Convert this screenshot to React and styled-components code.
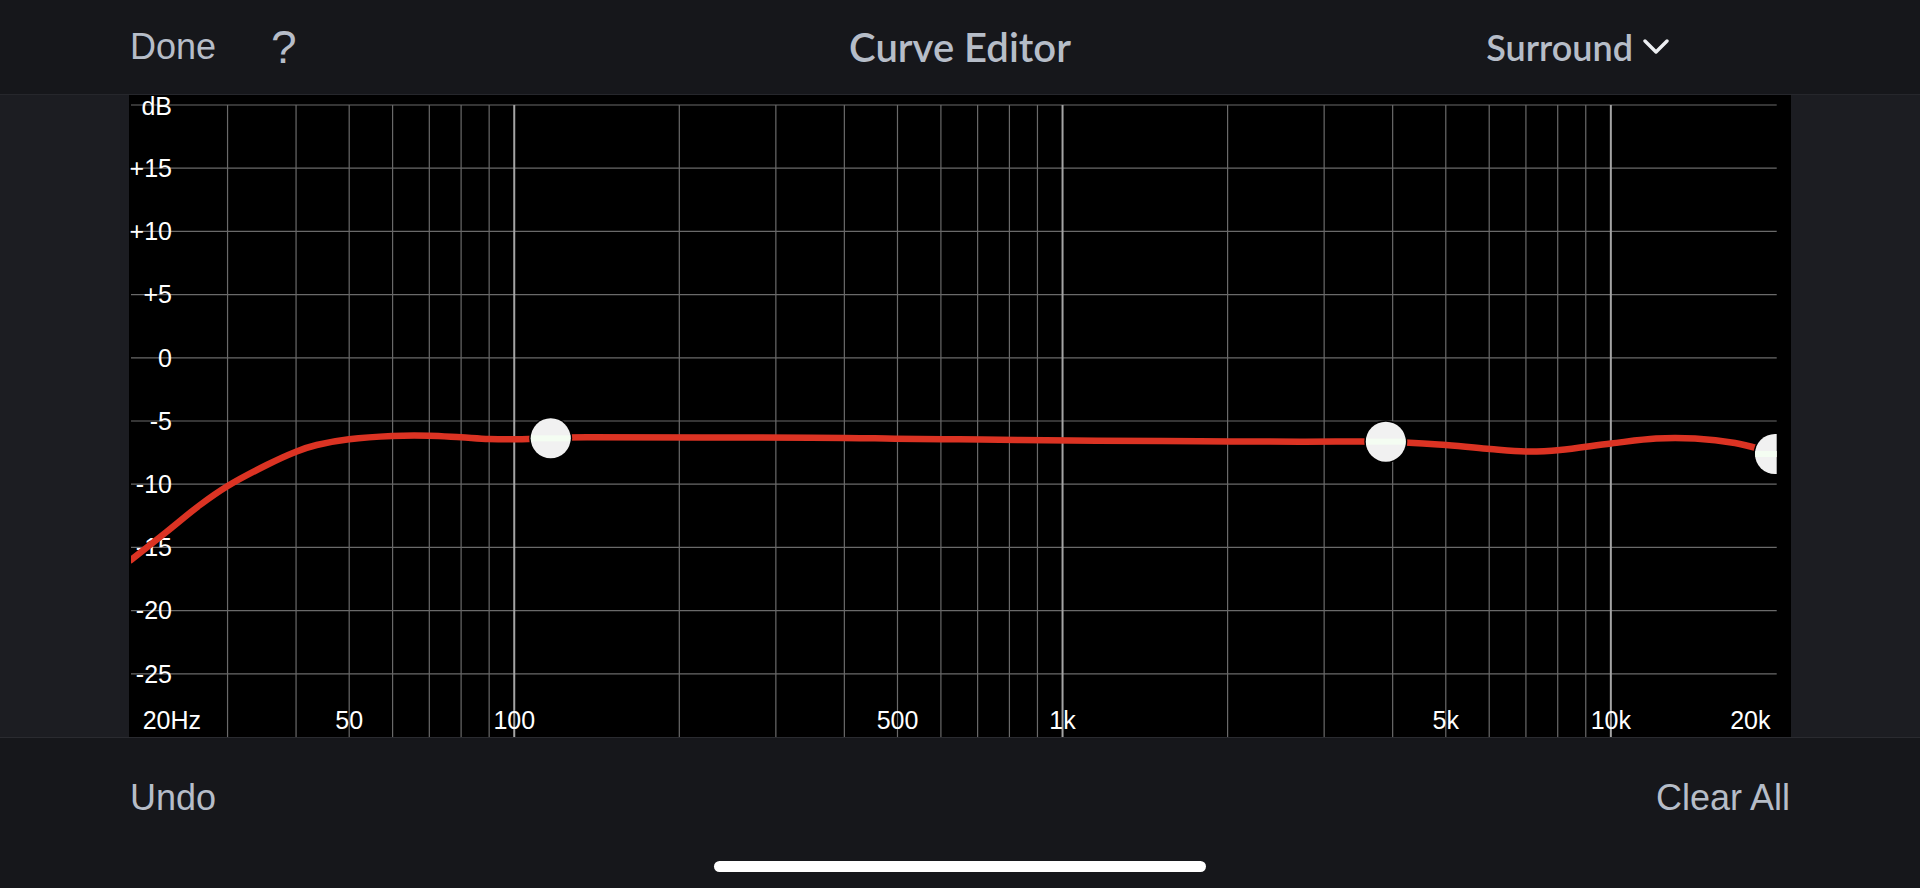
import React from "react";
import styled, { createGlobalStyle } from "styled-components";

const GlobalStyle = createGlobalStyle`
    html, body {
        margin: 0;
        padding: 0;
        background: #16171b;
    }
    #root {
        height: 888px;
    }
`

const Page = styled.div`
    height: 888px;
    display: flex;
    flex-direction: column;
    background: #16171b;
    overflow: hidden;
`

const Header = styled.div`
    height: 94px;
    flex-shrink: 0;
    display: grid;
    grid-template-columns: 1fr auto 1fr;
    align-items: center;
    padding: 0 130px;
    border-bottom: 1px solid #26272c;
`

const LeftGroup = styled.div`
    display: flex;
    align-items: center;
    gap: 55px;
`

const NavButton = styled.div`
    font-family: "Liberation Sans", Arial, sans-serif;
    font-size: ${(p) => p.size || 36}px;
    font-weight: ${(p) => p.weight || 400};
    color: #b6bdc8;
    line-height: 1;
`

const Title = styled.div`
    font-family: Lato, "Noto Sans", sans-serif;
    font-size: 40px;
    font-weight: 600;
    color: #b6bdc8;
    line-height: 1;
`

const ModeSelect = styled.div`
    justify-self: end;
    margin-right: 121px;
    display: flex;
    align-items: center;
    gap: 10px;
    font-family: Lato, "Noto Sans", sans-serif;
    font-size: 36px;
    font-weight: 600;
    color: #b6bdc8;
    line-height: 1;
`

const ChartRow = styled.div`
    height: 642px;
    flex-shrink: 0;
    padding: 0 129px;
    background: #1c1d22;
`

const ChartBox = styled.div`
    width: 1662px;
    height: 642px;
    background: #000;

    svg {
        display: block;
        overflow: visible;
    }
`

const Footer = styled.div`
    flex: 1;
    display: flex;
    flex-direction: column;
    border-top: 1px solid #2a2b30;
`

const FooterActions = styled.div`
    height: 120px;
    display: flex;
    align-items: center;
    justify-content: space-between;
    padding: 0 130px;
`

const HomeIndicator = styled.div`
    width: 492px;
    height: 11px;
    margin: 3px auto 0;
    border-radius: 6px;
    background: #fff;
`

const W = 1662
const H = 642
const PX_DECADE = 548.3
const PLOT_L = 2
const PLOT_R = 1647.7

const xOf = (f) => PLOT_L + PX_DECADE * Math.log10(f / 20)
const yOf = (db) => 10 + (20 - db) * 12.64

// 30Hz .. 10kHz, decades drawn brighter
let freqLines = []
for (let d of [10, 100, 1000]) {
    for (let m = 1; m <= 9; m++) {
        let f = d * m
        if (f >= 30) freqLines.push({ f, major: m === 1 })
    }
}
freqLines.push({ f: 10000, major: true })

const dbLabels = ["dB", "+15", "+10", "+5", "0", "-5", "-10", "-15", "-20", "-25"]

const freqLabels = [
    { t: "20Hz", x: 13.7, anchor: "start" },
    { t: "50", f: 50 },
    { t: "100", f: 100 },
    { t: "500", f: 500 },
    { t: "1k", f: 1000 },
    { t: "5k", f: 5000 },
    { t: "10k", f: 10000 },
    { t: "20k", x: 1641.5, anchor: "end" },
]

// measured on screen, page coords
const curvePts = [
    [131, 560], [166.7, 531.7], [200, 505], [227.7, 486], [266.7, 465], [296, 451.7],
    [316.7, 445], [349, 439.3], [392, 436], [429, 435.7], [461, 437.3], [489, 439],
    [513, 439.3], [550.7, 438.3], [587, 437.3], [811, 437.7], [895, 438.7], [959, 439.3],
    [1020, 440], [1097, 440.7], [1199, 441.3], [1300, 441.7], [1385.8, 441.7], [1446, 445],
    [1490, 449], [1526, 451.5], [1560, 450], [1611, 443.5], [1656, 438.5], [1695, 438.5],
    [1735, 443], [1763, 450], [1778, 455],
].map(([x, y]) => [x - 129, y - 95])

const handles = [
    [550.7 - 129, 438.3 - 95],
    [1385.8 - 129, 441.7 - 95],
    [1775 - 129, 454 - 95],
]

function smoothPath(pts) {
    let d = `M${pts[0][0]},${pts[0][1]}`
    for (let i = 0; i < pts.length - 1; i++) {
        let p0 = pts[i - 1] || pts[i]
        let p1 = pts[i]
        let p2 = pts[i + 1]
        let p3 = pts[i + 2] || p2
        let c1x = p1[0] + (p2[0] - p0[0]) / 6
        let c1y = p1[1] + (p2[1] - p0[1]) / 6
        let c2x = p2[0] - (p3[0] - p1[0]) / 6
        let c2y = p2[1] - (p3[1] - p1[1]) / 6
        d += ` C${c1x.toFixed(1)},${c1y.toFixed(1)} ${c2x.toFixed(1)},${c2y.toFixed(1)} ${p2[0].toFixed(1)},${p2[1].toFixed(1)}`
    }
    return d
}

function Chevron() {
    return (
        <svg width="26" height="16" viewBox="0 0 26 16">
            <path d="M2 2 L13 13 L24 2" fill="none" stroke="#eceef2" strokeWidth="3.4" strokeLinecap="round" strokeLinejoin="round" />
        </svg>
    )
}

function CurveChart() {
    return (
        <svg width={W} height={H} viewBox={`0 0 ${W} ${H}`}>
            <defs>
                <clipPath id="plot">
                    <rect x={PLOT_L} y="0" width={PLOT_R - PLOT_L} height={H} />
                </clipPath>
                <clipPath id="knob">
                    <circle r="20" />
                </clipPath>
            </defs>

            {dbLabels.map((t, i) => (
                <line key={t} x1={PLOT_L} x2={PLOT_R} y1={yOf(20 - i * 5)} y2={yOf(20 - i * 5)} stroke="#6a6a6a" strokeWidth="1.2" />
            ))}

            {freqLines.map((l) => (
                <line
                    key={l.f}
                    x1={xOf(l.f)}
                    x2={xOf(l.f)}
                    y1={10}
                    y2={H}
                    stroke={l.major ? "#a4a4a4" : "#6a6a6a"}
                    strokeWidth={l.major ? 2 : 1.2}
                />
            ))}

            <g fontFamily="'Liberation Sans', Arial, sans-serif" fontSize="25" fill="#fff">
                {dbLabels.map((t, i) => (
                    <text key={t} x="43" y={yOf(20 - i * 5) + (i === 0 ? 9.5 : 8.8)} textAnchor="end">{t}</text>
                ))}
                {freqLabels.map((l) => (
                    <text key={l.t} x={l.x !== undefined ? l.x : xOf(l.f)} y="634" textAnchor={l.anchor || "middle"}>{l.t}</text>
                ))}
            </g>

            <g clipPath="url(#plot)">
                <path d={smoothPath(curvePts)} fill="none" stroke="#db3323" strokeWidth="6.5" strokeLinecap="round" />
                {handles.map(([x, y], i) => (
                    <g key={i} transform={`translate(${x},${y})`}>
                        <circle r="21.5" fill="#000" />
                        <circle r="20" fill="#f1f1f1" />
                        <rect x="-20" y="-3" width="40" height="6" fill="#f4fdf2" clipPath="url(#knob)" />
                    </g>
                ))}
            </g>
        </svg>
    )
}

function App() {
    return (
        <Page>
            <GlobalStyle />

            <Header>
                <LeftGroup>
                    <NavButton>Done</NavButton>
                    <NavButton size={46}>?</NavButton>
                </LeftGroup>

                <Title>Curve Editor</Title>

                <ModeSelect>
                    Surround
                    <Chevron />
                </ModeSelect>
            </Header>

            <ChartRow>
                <ChartBox>
                    <CurveChart />
                </ChartBox>
            </ChartRow>

            <Footer>
                <FooterActions>
                    <NavButton>Undo</NavButton>
                    <NavButton>Clear All</NavButton>
                </FooterActions>
                <HomeIndicator />
            </Footer>
        </Page>
    )
}

export default App;
